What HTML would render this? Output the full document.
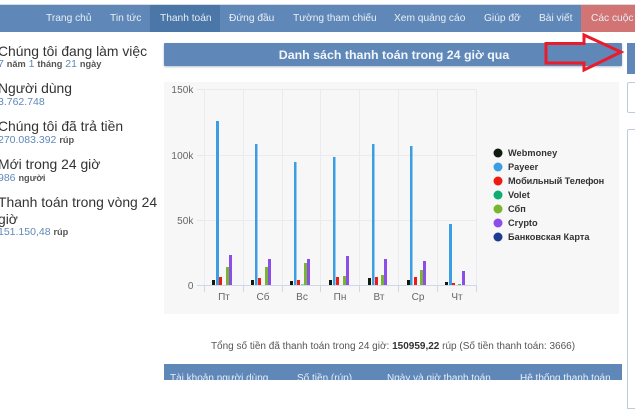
<!DOCTYPE html>
<html><head><meta charset="utf-8">
<style>
html,body{margin:0;padding:0;width:635px;height:409px;overflow:hidden;background:#fff;font-family:"Liberation Sans",sans-serif}
.a{position:absolute;white-space:nowrap}
.n{top:12px;font-size:10.2px;line-height:14px;color:#e8eff7}
.h{left:-2px;font-size:13.9px;line-height:16px;color:#333}
.s{left:-2px;font-size:10.5px;line-height:12px;color:#5f88b9}
.s b{font-size:9.2px;color:#555}
.t{top:372px;font-size:10px;line-height:14px;color:#e8eff7;height:8px;overflow:hidden}
.l{left:508px;font-size:9.2px;font-weight:bold;color:#333;line-height:11px}
</style></head><body>
<div class="a" style="left:0;top:4px;width:635px;height:1px;background:#d5dbe2"></div>
<div class="a" style="left:0;top:5px;width:635px;height:27px;background:#5f88b9"></div>
<div class="a" style="left:150px;top:5px;width:70px;height:27px;background:#4a76a8"></div>
<div class="a" style="left:581px;top:5px;width:54px;height:27px;background:#d27474"></div>
<div class="a n" style="left:46px">Trang chủ</div>
<div class="a n" style="left:110px">Tin tức</div>
<div class="a n" style="left:160px">Thanh toán</div>
<div class="a n" style="left:229px">Đứng đầu</div>
<div class="a n" style="left:293px">Tường tham chiếu</div>
<div class="a n" style="left:394px">Xem quảng cáo</div>
<div class="a n" style="left:484px">Giúp đỡ</div>
<div class="a n" style="left:539px">Bài viết</div>
<div class="a n" style="left:591px">Các cuộc</div>

<div class="a h" style="top:43px">Chúng tôi đang làm việc</div>
<div class="a s" style="top:58px">7 <b>năm</b> 1 <b>tháng</b> 21 <b>ngày</b></div>
<div class="a h" style="top:80px">Người dùng</div>
<div class="a s" style="top:96px">3.762.748</div>
<div class="a h" style="top:118px">Chúng tôi đã trả tiền</div>
<div class="a s" style="top:134px">270.083.392 <b>rúp</b></div>
<div class="a h" style="top:156px">Mới trong 24 giờ</div>
<div class="a s" style="top:172px">986 <b>người</b></div>
<div class="a h" style="top:194px">Thanh toán trong vòng 24</div>
<div class="a h" style="top:211px">giờ</div>
<div class="a s" style="top:226px">151.150,48 <b>rúp</b></div>

<div class="a" style="left:164px;top:43px;width:458px;height:23px;background:#5f88b9;box-shadow:0 1px 2px #b5c2d2;border-radius:1px"></div>
<div class="a" style="left:165px;top:47px;width:458px;text-align:center;font-size:12.4px;line-height:16px;font-weight:bold;color:#f2f6fa">Danh sách thanh toán trong 24 giờ qua</div>

<div class="a" style="left:627px;top:43px;width:8px;height:31px;background:#5f88b9"></div>
<div class="a" style="left:627px;top:82px;width:8px;height:31px;border:1px solid #bccde0;border-right:0;border-radius:2px 0 0 2px;box-sizing:border-box"></div>
<div class="a" style="left:627px;top:129px;width:8px;height:280px;border:1px solid #bccde0;border-right:0;border-radius:2px 0 0 0;box-sizing:border-box"></div>

<svg class="a" style="left:0;top:0" width="635" height="409" xmlns="http://www.w3.org/2000/svg">
<rect x="164" y="82" width="455" height="232" fill="#f7f7f7"/>
<g stroke="#ebebef" stroke-width="1" fill="none">
<path d="M204.500 89V285M243.500 89V285M282.500 89V285M320.500 89V285M359.500 89V285M398.500 89V285M437.500 89V285M476.500 89V285"/>
<path d="M204 89.500H476M204 155.500H476M204 220.500H476"/>
</g>
<g stroke="#e3e8f3" stroke-width="1" fill="none">
<path d="M197 89.500H204M197 155.500H204M197 220.500H204"/>
</g>
<path d="M197 285.500H476M204.500 285V292M243.500 285V292M282.500 285V292M320.500 285V292M359.500 285V292M398.500 285V292M437.500 285V292M476.500 285V292" stroke="#cfd8ea" stroke-width="1" fill="none"/>
<g font-family="Liberation Sans,sans-serif" font-size="10" fill="#666" text-anchor="end" letter-spacing=".1">
<text x="193.500" y="93">150k</text><text x="193.500" y="159">100k</text><text x="193.500" y="224">50k</text><text x="193.500" y="289">0</text>
</g>
<g font-family="Liberation Sans,sans-serif" font-size="10" fill="#666" text-anchor="middle">
<text x="224" y="300">Пт</text><text x="263" y="300">Сб</text><text x="302" y="300">Вс</text><text x="340" y="300">Пн</text><text x="379" y="300">Вт</text><text x="418" y="300">Ср</text><text x="457" y="300">Чт</text>
</g>
<g fill="#111a0e">
<rect x="212" y="280" width="3" height="5"/><rect x="251" y="280" width="3" height="5"/><rect x="290" y="281" width="3" height="4"/><rect x="329" y="280" width="3" height="5"/><rect x="368" y="278" width="3" height="7"/><rect x="407" y="280" width="3" height="5"/><rect x="445" y="282" width="3" height="3"/>
</g>
<g fill="#3b9ee3">
<rect x="216" y="121" width="3" height="164"/><rect x="255" y="144" width="2.500" height="141"/><rect x="294" y="162" width="2.500" height="123"/><rect x="333" y="157" width="2.500" height="128"/><rect x="372" y="144" width="2.500" height="141"/><rect x="410" y="146" width="2.500" height="139"/><rect x="449" y="224" width="3" height="61"/>
</g>
<g fill="#ee1c10">
<rect x="219" y="277" width="3" height="8"/><rect x="258" y="278" width="3" height="7"/><rect x="297" y="280" width="3" height="5"/><rect x="336" y="277" width="3" height="8"/><rect x="375" y="277" width="3" height="8"/><rect x="414" y="277" width="3" height="8"/><rect x="452" y="283" width="3" height="2"/>
</g>
<rect x="301" y="284" width="3" height="1" fill="#7fd8b8"/>
<g fill="#79b530">
<rect x="226" y="267" width="3" height="18"/><rect x="265" y="267" width="3" height="18"/><rect x="304" y="263" width="3" height="22"/><rect x="343" y="276" width="3" height="9"/><rect x="381" y="275" width="3" height="10"/><rect x="420" y="270" width="3" height="15"/><rect x="458" y="284" width="3" height="1"/>
</g>
<g fill="#8c4ee8">
<rect x="229" y="255" width="3" height="30"/><rect x="268" y="259" width="3" height="26"/><rect x="307" y="259" width="3" height="26"/><rect x="346" y="256" width="3" height="29"/><rect x="384" y="259" width="3" height="26"/><rect x="423" y="261" width="3" height="24"/><rect x="462" y="271" width="3" height="14"/>
</g>
<circle cx="498" cy="153" r="4.500" fill="#111a0e"/>
<circle cx="498" cy="167" r="4.500" fill="#3b9ee3"/>
<circle cx="498" cy="181" r="4.500" fill="#ee1c10"/>
<circle cx="498" cy="195" r="4.500" fill="#10ad72"/>
<circle cx="498" cy="209" r="4.500" fill="#79b530"/>
<circle cx="498" cy="223" r="4.500" fill="#8c4ee8"/>
<circle cx="498" cy="237" r="4.500" fill="#1d3b8f"/>
<path d="M546 43.500H584V35L621 52L584 70V63H546Z" fill="none" stroke="#ea1c2a" stroke-width="3"/>
</svg>

<div class="a l" style="top:148px;letter-spacing:.05px">Webmoney</div>
<div class="a l" style="top:162px">Payeer</div>
<div class="a l" style="top:176px;letter-spacing:-.1px">Мобильный Телефон</div>
<div class="a l" style="top:190px">Volet</div>
<div class="a l" style="top:204px">Сбп</div>
<div class="a l" style="top:218px">Crypto</div>
<div class="a l" style="top:232px">Банковская Карта</div>

<div class="a" style="left:164px;top:340px;width:458px;text-align:center;font-size:10px;line-height:14px;color:#555">Tổng số tiền đã thanh toán trong 24 giờ: <b style="color:#333">150959,22</b> rúp (Số tiền thanh toán: 3666)</div>

<div class="a" style="left:164px;top:364px;width:458px;height:16px;background:#5f88b9"></div>
<div class="a t" style="left:170px">Tài khoản người dùng</div>
<div class="a t" style="left:297px">Số tiền (rúp)</div>
<div class="a t" style="left:387px">Ngày và giờ thanh toán</div>
<div class="a t" style="left:520px">Hệ thống thanh toán</div>
</body></html>
